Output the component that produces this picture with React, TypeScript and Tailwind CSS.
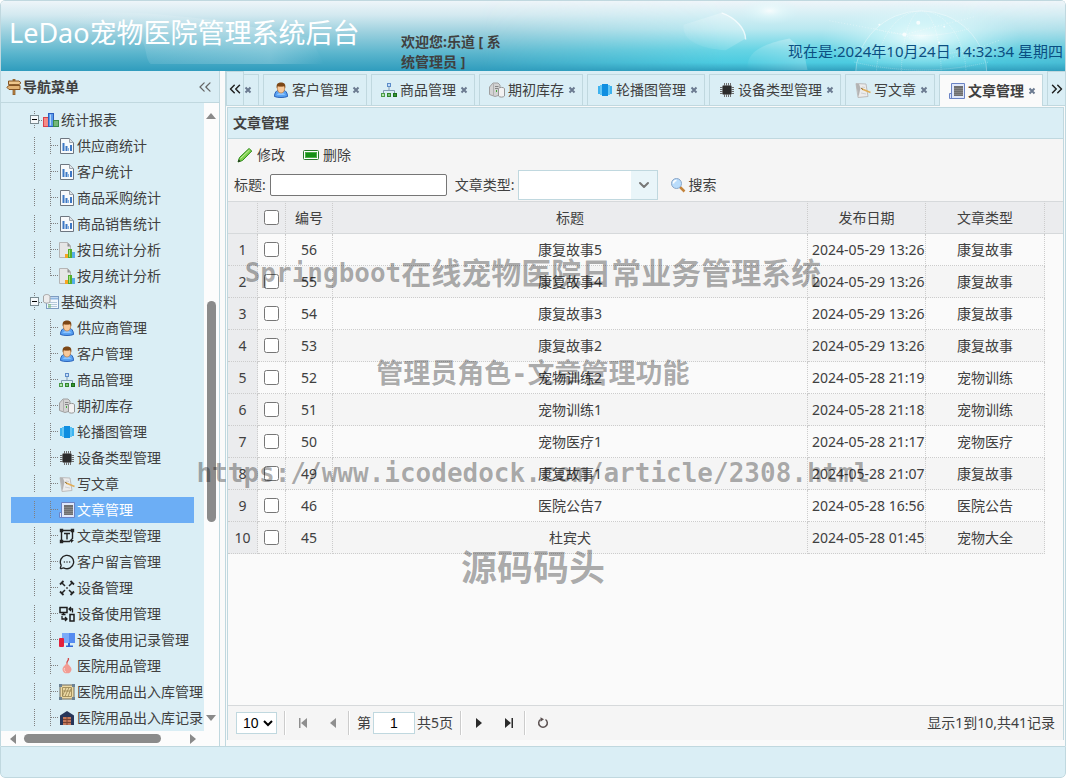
import React, { useState } from 'react'
import { ChevronDown, ChevronsLeft, ChevronsRight, MessageCircleMore } from 'lucide-react'

type IconName =
    | 'chart' | 'report' | 'analysis' | 'base' | 'user' | 'goods' | 'stock' | 'carousel' | 'chip'
    | 'write' | 'article' | 'type' | 'message' | 'device' | 'usage' | 'record' | 'supply' | 'crate' | 'house'

const drawings: Record<Exclude<IconName, 'message'>, React.ReactNode> = {
    chart: (
        <>
            <rect x='.5' y='5.5' width='5' height='9' fill='#f58a86' stroke='#d9404a' />
            <rect x='5.5' y='1.5' width='5' height='13' fill='#5b9bea' stroke='#2b5fc0' />
            <path d='M7.5 2.5v11' stroke='#b7d7fb' />
            <rect x='10.5' y='8.5' width='5' height='6' fill='#74b878' stroke='#3b8a4a' />
        </>
    ),
    report: (
        <>
            <path d='M1.5.5h9l4 4v11h-13z' fill='#f7f9fb' stroke='#6d7680' />
            <path d='M10.5.5v4h4' fill='#dfe4e8' stroke='#9aa2aa' />
            <path d='M4.5 5v8M7.5 8v5M12 7v6' stroke='#3d78c4' strokeWidth='2' />
            <path d='M9.5 10v3' stroke='#7fb0e6' />
        </>
    ),
    analysis: (
        <>
            <path d='M.5.5h8l3 3v12h-11z' fill='#e6e6e6' stroke='#b5b5b5' />
            <path d='M8.5.5v4h3z' fill='#8e8e8e' />
            <rect x='6' y='12' width='3' height='4' fill='#f5a623' />
            <rect x='9' y='7' width='4' height='9' fill='#52ad2e' />
            <path d='M10.5 8v7' stroke='#a6e37e' />
            <rect x='13' y='10' width='3' height='6' fill='#55aee8' />
        </>
    ),
    base: (
        <>
            <rect x='3.5' y='2.5' width='12' height='12' fill='#f3f8fd' stroke='#7d9cc0' />
            <path d='M4 4.5h11' stroke='#8db7e2' strokeWidth='2' />
            <path d='M5 8.5h9M5 10.5h9M5 12.5h9' stroke='#b4c9da' />
            <path d='M.5 2c1.5-2 5-2 6.5 0v6c-1.5 1.5-5 1.5-6.5 0z' fill='#ececec' stroke='#a5a5a5' />
            <path d='M5 11h3M5 13h3' stroke='#6bb368' />
        </>
    ),
    user: (
        <>
            <path d='M1.5 14.5c0-4 2-6 4-6.5h5c2 .5 4 2.500 4 6.5-3 1.300-10 1.300-13 0z' fill='#5aa3f3' stroke='#2861b8' />
            <path d='M4 13c1-3 7-3 8 0' fill='#8cc4ff' />
            <path d='M4.5 4v3c0 3 2 4 3.500 4s3.500-1 3.500-4V4z' fill='#f8c99a' stroke='#bf7a3c' strokeWidth='.7' />
            <path d='M3.800 6.500C3 2.500 4.500.5 8 .5s5 2 4.200 6l-1-2.500c-2.500.8-5 .6-6.500 0z' fill='#7c4716' />
        </>
    ),
    goods: (
        <>
            <path d='M8 5v4M2.5 11V8.5h11V11' fill='none' stroke='#829bb3' />
            <rect x='6.5' y='1.5' width='3' height='3' fill='#c4defa' stroke='#5d8cc8' />
            <rect x='.5' y='11.5' width='3' height='3' fill='#b6e6b0' stroke='#4a9b48' />
            <rect x='6.5' y='11.5' width='3' height='3' fill='#7cc576' stroke='#33862e' />
            <rect x='12.5' y='11.5' width='3' height='3' fill='#369532' stroke='#1b6d1b' />
        </>
    ),
    stock: (
        <>
            <path d='M.5 5l3.500-4h5l2 2v10l-5 1.500-5.500-2z' fill='#d3d3d3' stroke='#a0a0a0' />
            <path d='M4.5 2V14' stroke='#b0b0b0' />
            <path d='M6 4.5h3.500M6 6.500h3.500' stroke='#858585' />
            <path d='M9.5 6.500c1-1.500 5-1.500 6 0v7.500c-1 1.500-5 1.500-6 0z' fill='#f2f2f2' stroke='#969696' />
            <path d='M7.5 8v2' stroke='#41a838' />
        </>
    ),
    carousel: (
        <>
            <path d='M1 4h2v8H1zM13 4h2v8h-2z' fill='#3db3ef' />
            <path d='M3 3h2v10H3zM11 3h2v10h-2z' fill='#63c6f5' />
            <path d='M5 2h6v12H5z' fill='#0f8ee0' />
        </>
    ),
    chip: (
        <>
            <path d='M5.5 1v14M7.500 1v14M9.500 1v14M11.500 1v14M1 5.5h14M1 7.500h14M1 9.500h14M1 11.500h14' stroke='#6e6e6e' />
            <rect x='3.5' y='3.5' width='9' height='9' rx='1' fill='#2b2b2b' stroke='#777' strokeWidth='.6' />
        </>
    ),
    write: (
        <>
            <path d='M1 1.5l10 .5 2 12.500-10 1z' fill='#ececec' stroke='#bcbcbc' />
            <path d='M1 2h3l1.500 4L3.500 15z' fill='#b3b3b3' />
            <path d='M6 11l5 1M7 5l3 .5' stroke='#cfcfcf' />
            <path d='M7 7l8.500 3.500' stroke='#e0ae58' strokeWidth='1.500' />
            <path d='M6 6l2 1.500' stroke='#8a6a30' />
        </>
    ),
    article: (
        <>
            <path d='M2.5 10V.5h13v15H.5v-5h2z' fill='#dfe7fa' stroke='#6a83c4' />
            <path d='M2.5 10v5' stroke='#6a83c4' />
            <rect x='5' y='3' width='9' height='10' fill='#6f6f6f' />
            <path d='M5 5.5h9M5 7.500h9M5 9.500h9M5 11.500h9' stroke='#868686' />
        </>
    ),
    type: (
        <>
            <path d='M2.5 2.500h11v8l-3 3h-8z' fill='none' stroke='#222' strokeWidth='1.400' />
            <path d='M5 5.500h6M8 5.500v6' stroke='#222' strokeWidth='1.400' />
            <path d='M.8.8h3.400v3.400H.8zM11.800.8h3.400v3.400h-3.400zM.8 11.800h3.400v3.400H.8zM12 15v-3h3z' fill='#222' />
        </>
    ),
    device: (
        <>
            <path d='M2.500 2.500L6 6M13.500 2.500L10 6M2.500 13.500L6 10M13.500 13.500L10 10' stroke='#262626' strokeWidth='1.500' />
            <path d='M1 4.500L4.500 1M15 4.500L11.500 1M1 11.500L4.500 15M15 11.500L11.500 15' stroke='#262626' strokeWidth='1.800' />
            <path d='M7 7l2 2M9 7L7 9' stroke='#777' />
        </>
    ),
    usage: (
        <>
            <rect x='1' y='1.500' width='7' height='5' fill='none' stroke='#1c1c1c' strokeWidth='1.500' />
            <path d='M2.500 8.500h4M4.500 6v2' stroke='#1c1c1c' strokeWidth='1.500' />
            <rect x='11' y='8.500' width='4' height='6.500' fill='none' stroke='#1c1c1c' strokeWidth='1.500' />
            <path d='M13.500 6.500V3H10M12 1L10 3l2 2M3 10v3h4.500M6 11l2 2-2 2' fill='none' stroke='#1c1c1c' strokeWidth='1.300' />
        </>
    ),
    record: (
        <>
            <rect x='3' y='1' width='13' height='10' fill='#548bf0' />
            <path d='M3 1h7v10H3z' fill='#7aaaf8' />
            <path d='M9 11h2v3H9zM7 13.500h7V15H7z' fill='#2f68d8' />
            <rect x='0' y='6' width='5' height='9' rx='1' fill='#e3213c' />
        </>
    ),
    supply: (
        <>
            <path d='M9 0c2 2-2 3-1 6' fill='none' stroke='#d24a4a' strokeWidth='1.300' />
            <path d='M8 4c.5 3 4.500 4 4.500 7.500A4 4 0 018 15.300a4 4 0 01-4.500-3.800C3.500 8.500 7 7 8 4z' fill='#f29c93' />
            <path d='M5.500 10c-.8 2 .2 3.500 1.500 4' stroke='#fbd3cc' fill='none' />
        </>
    ),
    crate: (
        <>
            <rect x='1' y='1' width='14' height='14' fill='#ecd9a4' stroke='#6f6a5c' />
            <path d='M3.500 3.500h9v9h-9zM3.500 12L7 4M6 12.500l4-9M9 12.500l3-8M4 7h8' fill='none' stroke='#94824f' strokeWidth='.8' />
            <path d='M0 0h3v3H0zM13 0h3v3h-3zM0 13h3v3H0zM13 13h3v3h-3z' fill='#6d8394' />
        </>
    ),
    house: (
        <>
            <path d='M1 5.500L8 1l7 4.500V15H1z' fill='#27365a' />
            <rect x='4' y='7' width='8' height='8' fill='#c4785a' />
            <path d='M4 9.500h8M4 12.500h8M8 7v8' stroke='#7c4230' />
        </>
    ),
}

function Icon({ name }: { name: IconName }) {
    if (name === 'message') {
        return <MessageCircleMore className='size-4 shrink-0 text-[#222]' strokeWidth={2} />
    }
    return <svg viewBox='0 0 16 16' className='size-4 shrink-0' aria-hidden='true'>{drawings[name]}</svg>
}

const menu: { title: string, icon: IconName, children: { title: string, icon: IconName }[] }[] = [
    {
        title: '统计报表',
        icon: 'chart',
        children: [
            { title: '供应商统计', icon: 'report' },
            { title: '客户统计', icon: 'report' },
            { title: '商品采购统计', icon: 'report' },
            { title: '商品销售统计', icon: 'report' },
            { title: '按日统计分析', icon: 'analysis' },
            { title: '按月统计分析', icon: 'analysis' },
        ],
    },
    {
        title: '基础资料',
        icon: 'base',
        children: [
            { title: '供应商管理', icon: 'user' },
            { title: '客户管理', icon: 'user' },
            { title: '商品管理', icon: 'goods' },
            { title: '期初库存', icon: 'stock' },
            { title: '轮播图管理', icon: 'carousel' },
            { title: '设备类型管理', icon: 'chip' },
            { title: '写文章', icon: 'write' },
            { title: '文章管理', icon: 'article' },
            { title: '文章类型管理', icon: 'type' },
            { title: '客户留言管理', icon: 'message' },
            { title: '设备管理', icon: 'device' },
            { title: '设备使用管理', icon: 'usage' },
            { title: '设备使用记录管理', icon: 'record' },
            { title: '医院用品管理', icon: 'supply' },
            { title: '医院用品出入库管理', icon: 'crate' },
            { title: '医院用品出入库记录', icon: 'house' },
        ],
    },
]

const tabs: { title: string, icon: IconName }[] = [
    { title: '供应商管理', icon: 'user' },
    { title: '客户管理', icon: 'user' },
    { title: '商品管理', icon: 'goods' },
    { title: '期初库存', icon: 'stock' },
    { title: '轮播图管理', icon: 'carousel' },
    { title: '设备类型管理', icon: 'chip' },
    { title: '写文章', icon: 'write' },
    { title: '文章管理', icon: 'article' },
]

const articles = [
    { id: 56, title: '康复故事5', date: '2024-05-29 13:26:41', type: '康复故事' },
    { id: 55, title: '康复故事4', date: '2024-05-29 13:26:27', type: '康复故事' },
    { id: 54, title: '康复故事3', date: '2024-05-29 13:26:12', type: '康复故事' },
    { id: 53, title: '康复故事2', date: '2024-05-29 13:26:02', type: '康复故事' },
    { id: 52, title: '宠物训练2', date: '2024-05-28 21:19:35', type: '宠物训练' },
    { id: 51, title: '宠物训练1', date: '2024-05-28 21:18:20', type: '宠物训练' },
    { id: 50, title: '宠物医疗1', date: '2024-05-28 21:17:08', type: '宠物医疗' },
    { id: 49, title: '康复故事1', date: '2024-05-28 21:07:44', type: '康复故事' },
    { id: 46, title: '医院公告7', date: '2024-05-28 16:56:13', type: '医院公告' },
    { id: 45, title: '杜宾犬', date: '2024-05-28 01:45:50', type: '宠物大全' },
]

function Banner() {
    return (
        <svg className='absolute inset-0 size-full' viewBox='0 0 1066 71' preserveAspectRatio='none' aria-hidden='true'>
            <defs>
                <linearGradient id='sky' x1='0' y1='0' x2='0' y2='1'>
                    <stop offset='0' stopColor='#eef5f9' />
                    <stop offset='.2' stopColor='#d3e9f0' />
                    <stop offset='.45' stopColor='#9bd0de' />
                    <stop offset='.75' stopColor='#5ab5cd' />
                    <stop offset='1' stopColor='#2f9cbd' />
                </linearGradient>
                <linearGradient id='lagoon' x1='0' y1='0' x2='0' y2='1'>
                    <stop offset='0' stopColor='#eff5f9' />
                    <stop offset='.4' stopColor='#b9e8f0' />
                    <stop offset='.7' stopColor='#66d4e4' />
                    <stop offset='.88' stopColor='#4ccbe0' />
                    <stop offset='1' stopColor='#319fbd' />
                </linearGradient>
                <linearGradient id='fade' x1='0' x2='1'>
                    <stop offset='.45' stopColor='#000' />
                    <stop offset='.68' stopColor='#fff' />
                    <stop offset='.9' stopColor='#fff' />
                    <stop offset='1' stopColor='#999' />
                </linearGradient>
                <radialGradient id='glow'>
                    <stop offset='0' stopColor='#fff' stopOpacity='.95' />
                    <stop offset='.4' stopColor='#e9fcfd' stopOpacity='.55' />
                    <stop offset='1' stopColor='#d5f5f9' stopOpacity='0' />
                </radialGradient>
                <linearGradient id='rock' x1='0' y1='1' x2='1' y2='0'>
                    <stop offset='0' stopColor='#fff' stopOpacity='0' />
                    <stop offset='1' stopColor='#fff' stopOpacity='.35' />
                </linearGradient>
                <linearGradient id='mist' x1='0' x2='1'>
                    <stop offset='0' stopColor='#fff' stopOpacity='0' />
                    <stop offset='.8' stopColor='#fff' stopOpacity='.22' />
                    <stop offset='1' stopColor='#fff' stopOpacity='0' />
                </linearGradient>
                <mask id='right'><rect width='1066' height='71' fill='url(#fade)' /></mask>
            </defs>
            <rect width='1066' height='71' fill='url(#sky)' />
            <rect width='1066' height='71' fill='url(#lagoon)' mask='url(#right)' />
            <path d='M50 18c60-12 110-4 170 2l90 18 14 26H150c-8-8 0-22-20-34z' fill='url(#mist)' />
            <path d='M684 24l38-12c14 5 24 16 24 26l-20 12c-26-2-44-10-42-26z' fill='url(#rock)' />
            <path d='M722 12c14 5 24 16 24 27' fill='none' stroke='#fff' strokeWidth='1.500' opacity='.7' />
            <path d='M748 70c-2-18 14-26 42-32l14 12 4 20z' fill='url(#rock)' />
            <ellipse cx='770' cy='10' rx='30' ry='14' fill='url(#glow)' opacity='.8' />
            <ellipse cx='922' cy='36' rx='100' ry='36' fill='url(#glow)' />
            <g fill='none' stroke='#fff' opacity='.35'>
                <circle cx='922' cy='76' r='66' fill='#9eeaf2' fillOpacity='.4' />
                <ellipse cx='922' cy='76' rx='45' ry='66' strokeDasharray='1 1' />
                <ellipse cx='922' cy='76' rx='20' ry='66' strokeDasharray='1 1' />
                <path d='M874 28q48 14 96 0M860 46q62 18 124 0M855 62q67 16 134 0' strokeDasharray='1 1' />
                <path d='M830 20L905 34L975 16M905 34L945 60L1000 40' strokeDasharray='1 2' />
            </g>
            <g fill='#fff' opacity='.8'>
                <circle cx='905' cy='34' r='2' />
                <circle cx='880' cy='24' r='1' />
                <circle cx='919' cy='22' r='2' />
                <circle cx='945' cy='26' r='1' />
                <circle cx='940' cy='42' r='1' />
            </g>
        </svg>
    )
}

function Watermark() {
    return (
        <div className='pointer-events-none absolute inset-0 flex flex-col items-center overflow-hidden pt-[224px] font-["DejaVu_Sans_Mono","Noto_Sans_CJK_SC",monospace] font-bold whitespace-nowrap text-black/32'>
            <p className='flex h-[100px] items-center text-[30px]'><span className='text-[26px]'>Springboot</span>在线宠物医院日常业务管理系统</p>
            <p className='flex h-[100px] items-center text-[27px]'>管理员角色-文章管理功能</p>
            <p className='flex h-[100px] items-center text-[26px]'>https://www.icodedock.com/article/2308.html</p>
            <p className='flex h-[90px] items-center text-[36px]'>源码码头</p>
        </div>
    )
}

function TreeLine({ branch, last }: { branch?: boolean, last?: boolean }) {
    return (
        <svg viewBox='0 0 16 18' className='h-[18px] w-4 shrink-0' stroke='#808080' strokeDasharray='1 1' aria-hidden='true'>
            <path d={last ? 'M7.500 0v9' : 'M7.500 0v18'} />
            {branch && <path d='M8 8.500h8' />}
        </svg>
    )
}

function Sidebar({ active, onSelect }: { active: string, onSelect: (title: string) => void }) {
    return (
        <aside className='flex w-[220px] shrink-0 flex-col border-x border-[#c0d8df] bg-[#daeef5]'>
            <div className='flex h-8 shrink-0 items-center border-b border-[#c0d8df] pr-1 pl-[5px]'>
                <svg viewBox='0 0 16 16' className='size-4' aria-hidden='true'>
                    <path d='M7 0h2v16H7z' fill='#c18a4a' stroke='#7b4d1d' strokeWidth='.7' />
                    <path d='M2.500 2H13l2 1.800-2 1.800H2.500z' fill='#eec68b' stroke='#845423' />
                    <path d='M14 6.500H3L.8 8.300 3 10.500h11z' fill='#e3b475' stroke='#845423' />
                </svg>
                <h2 className='flex-1 pl-px font-bold'>导航菜单</h2>
                <button aria-label='收起'>
                    <ChevronsLeft className='size-5 text-[#666]' strokeWidth={1.5} />
                </button>
            </div>
            <div className='flex min-h-0 flex-1'>
                <nav className='min-w-0 flex-1 overflow-hidden pt-1'>
                    <ul className='mr-[10px] ml-[10px]'>
                        {menu.map((group, g) => (
                            <li key={group.title}>
                                <div className='flex h-[26px] items-center pl-4'>
                                    <svg viewBox='0 0 16 18' className='h-[18px] w-4 shrink-0' aria-hidden='true'>
                                        <path d='M7.500 0v18M12 9.500h4' stroke='#808080' strokeDasharray='1 1' />
                                        <rect x='3.500' y='4.500' width='8' height='8' fill='#f4f8fa' stroke='#7a8a90' />
                                        <path d='M5 8.500h5' stroke='#000' />
                                    </svg>
                                    <Icon name={group.icon} />
                                    <span className='pl-0.5 whitespace-nowrap'>{group.title}</span>
                                </div>
                                <ul>
                                    {group.children.map((item, i) => (
                                        <li key={item.title}>
                                            <a
                                                href='#'
                                                onClick={() => onSelect(item.title)}
                                                className={item.title === active
                                                    ? 'flex h-[26px] items-center bg-[#6caef5] pl-4 text-white'
                                                    : 'flex h-[26px] items-center pl-4'}
                                            >
                                                <TreeLine />
                                                <TreeLine branch last={g === 0 && i === group.children.length - 1} />
                                                <Icon name={item.icon} />
                                                <span className='pl-0.5 whitespace-nowrap'>{item.title}</span>
                                            </a>
                                        </li>
                                    ))}
                                </ul>
                            </li>
                        ))}
                    </ul>
                </nav>
                <div className='flex w-[15px] shrink-0 flex-col items-center bg-[#fcfcfc] pt-2.5 pr-px pb-2.5'>
                    <svg viewBox='0 0 10 6' className='h-1.5 w-2.5' aria-hidden='true'><path d='M0 6l5-6 5 6z' fill='#8a8a8a' /></svg>
                    <div className='flex-[182]' />
                    <div className='w-[9px] flex-[220] rounded-full bg-[#8b8b8b]' />
                    <div className='flex-[193]' />
                    <svg viewBox='0 0 10 6' className='h-1.5 w-2.5' aria-hidden='true'><path d='M0 0l5 6 5-6z' fill='#8a8a8a' /></svg>
                </div>
            </div>
            <div className='flex h-[15px] shrink-0 items-center bg-[#fcfcfc] pr-[23px] pl-[9px]'>
                <svg viewBox='0 0 6 10' className='h-2.5 w-1.5' aria-hidden='true'><path d='M6 0L0 5l6 5z' fill='#8a8a8a' /></svg>
                <div className='ml-2 h-[9px] w-[137px] rounded-full bg-[#8b8b8b]' />
                <svg viewBox='0 0 6 10' className='ml-auto h-2.5 w-1.5' aria-hidden='true'><path d='M0 0l6 5-6 5z' fill='#8a8a8a' /></svg>
            </div>
        </aside>
    )
}

function TabBar({ active, onSelect }: { active: string, onSelect: (title: string) => void }) {
    return (
        <div className='flex h-[35px] shrink-0 border-b border-[#c0d8df] bg-[#daeef5]'>
            <button aria-label='向左滚动' className='flex w-[18px] shrink-0 items-center justify-center border-x border-t border-[#c0d8df]'>
                <ChevronsLeft className='size-[18px] shrink-0 text-[#222]' strokeWidth={2} />
            </button>
            <ul className='-mb-px flex min-w-0 flex-1 justify-end gap-1 overflow-hidden pt-[3px] pr-1'>
                {tabs.map(tab => (
                    <li
                        key={tab.title}
                        className={tab.title === active
                            ? 'flex shrink-0 items-center border border-b-0 border-[#c0d8df] bg-[#fafafa] pr-1.5 pl-[9px] font-bold'
                            : 'flex shrink-0 items-center border border-[#c0d8df] pr-1.5 pl-[9px]'}
                    >
                        <button className='flex items-center gap-[3px] whitespace-nowrap' onClick={() => onSelect(tab.title)}>
                            <Icon name={tab.icon} />
                            {tab.title}
                        </button>
                        <button aria-label={'关闭' + tab.title} className='ml-1'>
                            <svg viewBox='0 0 8 8' className='size-2' aria-hidden='true'>
                                <path d='M1.500 1.500l5 5M6.500 1.500l-5 5' stroke='#6b7a90' strokeWidth='2' />
                            </svg>
                        </button>
                    </li>
                ))}
            </ul>
            <button aria-label='向右滚动' className='flex w-[18px] shrink-0 items-center justify-center border-t border-l border-[#c0d8df]'>
                <ChevronsRight className='size-[18px] shrink-0 text-[#222]' strokeWidth={2} />
            </button>
        </div>
    )
}

function Toolbar() {
    return (
        <div className='shrink-0 bg-[#f5f5f5] pb-px'>
            <div className='flex h-[31px] items-center gap-[18px] pl-[9px]'>
                <button className='flex items-center gap-1'>
                    <svg viewBox='0 0 16 16' className='size-4' aria-hidden='true'>
                        <path d='M1 15l1.500-4.500L12 1.500l2.800 2.500L5.500 13.500z' fill='#7ed04c' stroke='#2f8a1c' />
                        <path d='M3.500 11.500L12.500 3' stroke='#c5f09f' />
                        <path d='M1 15l.8-2.500 1.700 1.700z' fill='#222' />
                    </svg>
                    修改
                </button>
                <button className='flex items-center gap-1'>
                    <svg viewBox='0 0 16 16' className='size-4' aria-hidden='true'>
                        <rect x='.5' y='3.500' width='15' height='9' rx='1' fill='#fff' stroke='#2a7a2c' />
                        <rect x='2.500' y='5.500' width='11' height='5' fill='#169016' stroke='#4dae4a' />
                    </svg>
                    删除
                </button>
            </div>
            <form className='flex h-[30px] items-center pl-1.5' onSubmit={e => e.preventDefault()}>
                <label htmlFor='title'>标题:</label>
                <input id='title' type='text' className='ml-1 h-[22px] w-[177px] rounded-xs border border-[#767676] bg-white px-1' />
                <label htmlFor='articleType' className='ml-2'>文章类型:</label>
                <div className='relative ml-[3px] h-[30px] w-[140px]'>
                    <select id='articleType' defaultValue='' className='size-full appearance-none border border-[#c0d8df] bg-white pr-7 pl-1'>
                        <option value=''></option>
                        <option>康复故事</option>
                        <option>宠物训练</option>
                        <option>宠物医疗</option>
                        <option>医院公告</option>
                        <option>宠物大全</option>
                    </select>
                    <span className='pointer-events-none absolute inset-y-px right-px flex w-[26px] items-center justify-center bg-[#e9f5f9]'>
                        <ChevronDown className='size-4 text-[#777]' strokeWidth={3} />
                    </span>
                </div>
                <button className='ml-3 flex items-center gap-[3px]'>
                    <svg viewBox='0 0 16 16' className='size-4' aria-hidden='true'>
                        <path d='M10 10l4.500 4.500' stroke='#c4843c' strokeWidth='2.500' />
                        <circle cx='6.500' cy='6.500' r='5' fill='#b9dcfb' stroke='#8aa6c8' />
                        <path d='M3.500 6.500c0-2 1.500-3 3-3' fill='none' stroke='#fff' strokeWidth='1.500' />
                    </svg>
                    搜索
                </button>
            </form>
        </div>
    )
}

function ArticleTable() {
    const head = 'h-[33px] border-y border-y-[#d6d9db] border-r border-r-[#ccc] p-0 font-normal [border-right-style:dotted] bg-[#ebecee]'
    const cell = 'h-8 overflow-hidden border-r border-b border-dotted border-[#ccc] p-0 text-center whitespace-nowrap'

    return (
        <table className='w-full table-fixed border-separate border-spacing-0'>
            <colgroup>
                <col className='w-[30px]' />
                <col className='w-7' />
                <col className='w-[47px]' />
                <col />
                <col className='w-[118px]' />
                <col className='w-[119px]' />
                <col className='w-[18px]' />
            </colgroup>
            <thead>
                <tr>
                    <th className={head}></th>
                    <th className={head}>
                        <input type='checkbox' aria-label='全选' className='block mx-auto size-[15px]' />
                    </th>
                    <th className={head}>编号</th>
                    <th className={head}>标题</th>
                    <th className={head}>发布日期</th>
                    <th className={head}>文章类型</th>
                    <th className='h-[33px] border-y border-[#d6d9db] bg-[#ebecee] p-0'></th>
                </tr>
            </thead>
            <tbody>
                {articles.map((row, i) => (
                    <tr key={row.id} className='group'>
                        <td className={`${cell} bg-[#ebecee]`}>{i + 1}</td>
                        <td className={`${cell} group-even:bg-[#f5f5f5]`}>
                            <input type='checkbox' aria-label={row.title} className='block mx-auto size-[15px]' />
                        </td>
                        <td className={`${cell} group-even:bg-[#f5f5f5]`}>{row.id}</td>
                        <td className={`${cell} group-even:bg-[#f5f5f5]`}>{row.title}</td>
                        <td className={`${cell} group-even:bg-[#f5f5f5]`}>
                            <div className='overflow-hidden pl-1 text-left'>{row.date}</div>
                        </td>
                        <td className={`${cell} group-even:bg-[#f5f5f5]`}>{row.type}</td>
                        <td className='p-0'></td>
                    </tr>
                ))}
            </tbody>
        </table>
    )
}

function Pager() {
    const separator = 'h-6 w-0.5 border-r border-l border-r-white border-l-[#ccc]'
    const button = 'flex size-[30px] items-center justify-center'

    return (
        <div className='flex h-[35px] shrink-0 items-center border-t border-[#d6d9db] bg-[#f5f5f5] pr-2 pl-2'>
            <select aria-label='每页条数' defaultValue='10' className='mr-[7px] h-[22px] w-[41px] border border-[#c0d8df] bg-white pl-0.5 font-["Liberation_Sans",sans-serif] text-sm text-black'>
                <option>10</option>
                <option>20</option>
                <option>50</option>
            </select>
            <span className={separator} />
            <button aria-label='首页' className={`${button} ml-0.5`} disabled>
                <svg viewBox='0 0 10 10' className='size-2.5' aria-hidden='true'><path d='M1 0h1.500v10H1zM9 0v10L3 5z' fill='#8f8f8f' /></svg>
            </button>
            <button aria-label='上一页' className={button} disabled>
                <svg viewBox='0 0 10 10' className='size-2.5' aria-hidden='true'><path d='M8 0v10L2 5z' fill='#8f8f8f' /></svg>
            </button>
            <span className={separator} />
            <label className='ml-[7px] flex items-center gap-0.5'>
                第
                <input type='text' defaultValue='1' className='h-[22px] w-[42px] border border-[#c0d8df] bg-white text-center font-["Liberation_Sans",sans-serif] text-black' />
                共5页
            </label>
            <span className={`${separator} ml-[7px]`} />
            <button aria-label='下一页' className={`${button} ml-0.5`}>
                <svg viewBox='0 0 10 10' className='size-2.5' aria-hidden='true'><path d='M2 0v10l6-5z' fill='#2b2b2b' /></svg>
            </button>
            <button aria-label='尾页' className={button}>
                <svg viewBox='0 0 10 10' className='size-2.5' aria-hidden='true'><path d='M1 0v10l6-5zM7.500 0H9v10H7.500z' fill='#2b2b2b' /></svg>
            </button>
            <span className={separator} />
            <button aria-label='刷新' className={`${button} ml-0.5`}>
                <svg viewBox='0 0 12 12' className='size-3' aria-hidden='true'>
                    <path d='M8.500 2.500a4.300 4.300 0 11-5 0' fill='none' stroke='#5a5050' strokeWidth='1.500' />
                    <path d='M3.500.3l3.500 2-3.500 2.400z' fill='#5a5050' />
                </svg>
            </button>
            <span className='ml-auto'>显示1到10,共41记录</span>
        </div>
    )
}

export default function App() {
    const [active, setActive] = useState('文章管理')

    return (
        <div className='relative flex h-screen flex-col overflow-hidden rounded-[5px] bg-[#fafafa] font-["Noto_Sans","Noto_Sans_CJK_SC",sans-serif] text-sm text-[#404040]'>
            <header className='relative flex h-[71px] shrink-0 overflow-hidden rounded-t-[5px] border-x border-t border-[#c0d8df]'>
                <Banner />
                <h1 className='relative w-[400px] shrink-0 pt-3 pl-2 text-[27px] leading-10 whitespace-nowrap text-white'>LeDao宠物医院管理系统后台</h1>
                <p className='relative w-[112px] shrink-0 pt-[31px] leading-5 font-bold'>欢迎您:乐道 [ 系统管理员 ]</p>
                <time className='relative ml-auto pt-10 pr-0.5 text-[15px] leading-5 whitespace-nowrap text-[#0b4f82]'>现在是:2024年10月24日 14:32:34 星期四</time>
            </header>
            <div className='flex min-h-0 flex-1'>
                <Sidebar active={active} onSelect={setActive} />
                <main className='ml-[5px] flex min-w-0 flex-1 flex-col border-x border-[#c0d8df]'>
                    <TabBar active={active} onSelect={setActive} />
                    <section className='mx-px mt-px mb-1.5 flex min-h-0 flex-1 flex-col border-x border-t border-[#c0d8df]'>
                        <h2 className='flex h-[31px] shrink-0 items-center border-b border-[#c0d8df] bg-[#daeef5] pl-[5px] font-bold'>{active}</h2>
                        <Toolbar />
                        <div className='min-h-0 flex-1 overflow-hidden'>
                            <ArticleTable />
                        </div>
                        <Pager />
                    </section>
                </main>
            </div>
            <footer className='h-8 shrink-0 rounded-b-[5px] border border-[#c0d8df] bg-[#daeef5]' />
            <Watermark />
        </div>
    )
}
